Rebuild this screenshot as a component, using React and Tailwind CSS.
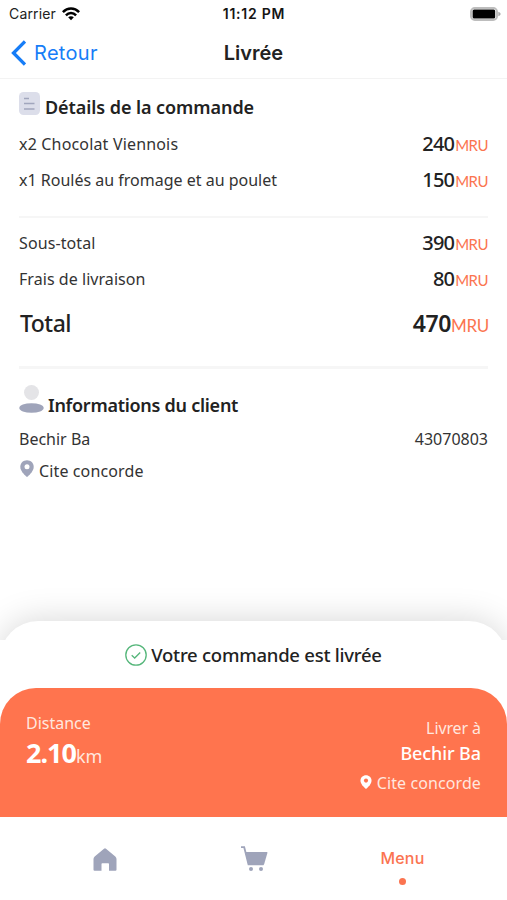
import React from "react";

function Wifi() {
  return (
    <svg className="ml-[6px] h-[14px] w-[18px]" viewBox="0 0 18 14" fill="none" stroke="#000" strokeWidth="2.5">
      <path d="M.9 5.1C5.5.4 12.5.4 17.1 5.1" />
      <path d="M3.9 8.3C6.8 5.3 11.2 5.3 14.1 8.3" />
      <path d="M6.2 10.3C7.8 8.8 10.2 8.8 11.8 10.3L9 13.2Z" fill="#000" stroke="none" />
    </svg>
  );
}

function Battery() {
  return (
    <svg className="h-[14px] w-[31px]" viewBox="0 0 31 14">
      <rect x="1" y="1" width="26" height="12" rx="3.8" fill="#fff" stroke="#bdbdbd" strokeWidth="2" />
      <rect x="2.6" y="2.4" width="22.6" height="9.2" rx="1.6" fill="#000" />
      <path d="M28.300 4.800c3 .8 3 3.600 0 4.400Z" fill="#aaa" />
    </svg>
  );
}

function Pin({ className, hole }) {
  return (
    <svg className={className} viewBox="0 0 14 17">
      <path fill="currentColor" d="M7 .3C3.200.3.3 3.100.3 6.800c0 4 3.800 7.800 5.900 9.600q.8.6 1.600 0c2.100-1.800 5.900-5.600 5.900-9.600C13.700 3.100 10.800.3 7 .3Z" />
      <circle cx="7" cy="6.800" r="2.500" fill={hole} />
    </svg>
  );
}

function Row({ label, price, labelClass = "" }) {
  return (
    <div className="flex h-[36px] items-center justify-between">
      <span className={labelClass}>{label}</span>
      <span className="flex items-baseline">
        <span className="text-[20px] font-medium tracking-[-0.8px] text-[#222]">{price}</span>
        <span className="ml-[1px] font-[Lato] text-[15px] tracking-[-0.5px] text-[#fb7450]">MRU</span>
      </span>
    </div>
  );
}

export default function App() {
  return (
    <div className="flex h-[900px] w-[507px] flex-col overflow-hidden bg-white font-['Noto_Sans',sans-serif] text-[16px] text-[#333]">
      <header className="h-[79px] shrink-0 border-b border-[#f3f3f3] font-[Inter,sans-serif]">
        <div className="grid h-[27px] grid-cols-3 items-center pr-[6px] pl-[9px] text-[14px]">
          <div className="flex items-center text-[#222]"><span className="tracking-[0.15px]">Carrier</span><Wifi /></div>
          <span className="-ml-[2px] text-center font-semibold tracking-[0.75px] text-[#151515]">11:12 PM</span>
          <div className="flex justify-end"><Battery /></div>
        </div>
        <div className="grid h-[51px] grid-cols-3 items-center px-[11px]">
          <div className="flex items-center text-[20px] text-[#177df7]">
            <svg className="mr-[8px] h-[26px] w-[15px]" viewBox="0 0 15 26" fill="none" stroke="currentColor" strokeWidth="3.300"><path d="M14 1.500L2.500 13 14 24.500" /></svg>
            <span className="tracking-[0.3px]">Retour</span>
          </div>
          <h1 className="text-center text-[20px] font-semibold text-[#222]">Livrée</h1>
        </div>
      </header>

      <main className="h-[542px] shrink-0 px-[19px]">
        <div className="flex h-[47px] items-center">
          <svg className="mt-[2px] mr-[5px] h-[24px] w-[21px]" viewBox="0 0 21 24">
            <rect width="21" height="23" rx="4.500" fill="#dcdeea" />
            <path d="M5 6.500h5M5 11.500h10.500M5 17h10.500" stroke="#a1a6bd" strokeWidth="1.400" />
          </svg>
          <h2 className="mt-[10px] text-[18px] font-semibold tracking-[-0.07px] text-[#222]">Détails de la commande</h2>
        </div>
        <Row label="x2 Chocolat Viennois" price="240" labelClass="tracking-[0.17px]" />
        <Row label="x1 Roulés au fromage et au poulet" price="150" />
        <div className="mt-[18px] mb-[7px] h-[2px] bg-[#f6f6f6]" />
        <Row label="Sous-total" price="390" labelClass="tracking-[0.1px]" />
        <Row label="Frais de livraison" price="80" labelClass="tracking-[0.05px]" />
        <div className="flex h-[52px] items-center justify-between text-[#222]">
          <span className="pl-[1px] text-[23px] font-medium tracking-[-0.5px]">Total</span>
          <span className="flex items-baseline"><span className="text-[23px] font-semibold tracking-[-0.4px]">470</span><span className="-mr-[1px] font-[Lato] text-[17px] tracking-[-0.3px] text-[#fb7450]">MRU</span></span>
        </div>
        <div className="mt-[17px] h-[3px] bg-[#f6f6f6]" />
        <div className="flex h-[54px] items-center">
          <svg className="mt-[6px] mr-[4px] h-[28px] w-[25px]" viewBox="0 0 25 28">
            <circle cx="12.500" cy="7.500" r="7.500" fill="#e4e4e7" /><ellipse cx="12.500" cy="23" rx="12.200" ry="4.800" fill="#9fa4ba" />
          </svg>
          <h2 className="mt-[18px] text-[18px] font-semibold tracking-[-0.27px] text-[#222]">Informations du client</h2>
        </div>
        <div className="flex h-[31px] items-center justify-between"><span>Bechir Ba</span><span>43070803</span></div>
        <div className="flex h-[33px] items-center"><Pin className="mr-[5px] mb-[4px] ml-[1px] h-[17px] w-[14px] text-[#9fa4ba]" hole="#fff" /><span className="tracking-[0.12px]">Cite concorde</span></div>
      </main>

      <section className="relative h-[196px] shrink-0 rounded-t-[38px] bg-white shadow-[0_0_34px_rgba(0,0,0,0.17)]">
        <div className="absolute inset-x-0 top-[19px] h-[100px] bg-white" />
        <div className="relative flex h-[67px] items-center justify-center pt-[1px] text-[#222]">
          <svg className="mr-[4px] h-[22px] w-[22px]" viewBox="0 0 22 22" fill="none" stroke="#55b67a" strokeWidth="1.300"><circle cx="11" cy="11" r="10.200" /><path d="M6.700 11.300l3 2.700 5.500-5.500" /></svg>
          <span className="text-[18.5px] font-medium tracking-[-0.25px]">Votre commande est livrée</span>
        </div>
        <div className="relative flex h-[129px] justify-between rounded-t-[36px] bg-[#ff744e] px-[26px] text-white">
          <div className="pt-[23px]">
            <div className="h-[24px] leading-[24px] text-[#ffe7df]">Distance</div>
            <div className="flex h-[36px] items-baseline leading-[36px]"><span className="text-[27px] font-bold tracking-[-1px]">2.10</span><span className="text-[18px] text-[#ffe7df]">km</span></div>
          </div>
          <div className="flex flex-col items-end pt-[28px]">
            <div className="h-[24px] leading-[24px] tracking-[-0.1px] text-[#ffe7df]">Livrer à</div>
            <div className="h-[26px] text-[18px] leading-[26px] font-medium tracking-[-0.1px]">Bechir Ba</div>
            <div className="mt-[5px] flex h-[24px] items-center text-[#ffe7df]"><Pin className="mr-[5px] mb-[2px] h-[14px] w-[12px] text-white" hole="#ff744e" /><span className="tracking-[0.1px]">Cite concorde</span></div>
          </div>
        </div>
      </section>

      <nav className="z-10 flex h-[83px] shrink-0 bg-white px-[30px] font-[Inter,sans-serif]">
        <div className="flex w-[149px] justify-center pt-[31px]">
          <svg className="h-[23px] w-[24px]" viewBox="0 0 24 23" fill="#9fa4ba"><path d="M11 .7q1-.7 2 0L22.300 8.600q1.200 1.100 1.200 2.300V21.700q0 1.100-1.100 1.100H16V16q0-.8-.8-.8H9.300q-.8 0-.8.8v6.800H1.600q-1.100 0-1.100-1.100V10.900q0-1.200 1.200-2.300Z" /></svg>
        </div>
        <div className="flex w-[149px] justify-center pt-[29px]">
          <svg className="h-[26px] w-[28px]" viewBox="0 0 28 26" fill="#9fa4ba"><path d="M1 1.200H4.200L8.500 18.300H23.500" fill="none" stroke="#9fa4ba" strokeWidth="1.800" /><path d="M5.200 6H27q.6.200.4 1L24.200 18q-.3.900-1.300.9H8.400Z" /><circle cx="11" cy="23" r="2" /><circle cx="21" cy="23" r="2" /></svg>
        </div>
        <div className="flex w-[149px] flex-col items-center pt-[29px] text-[16px] leading-[24px] font-medium text-[#fb7450]">
          <span className="tracking-[0.2px]">Menu</span><span className="mt-[8px] h-[7px] w-[7px] rounded-full bg-[#fb7450]" />
        </div>
      </nav>
    </div>
  );
}
